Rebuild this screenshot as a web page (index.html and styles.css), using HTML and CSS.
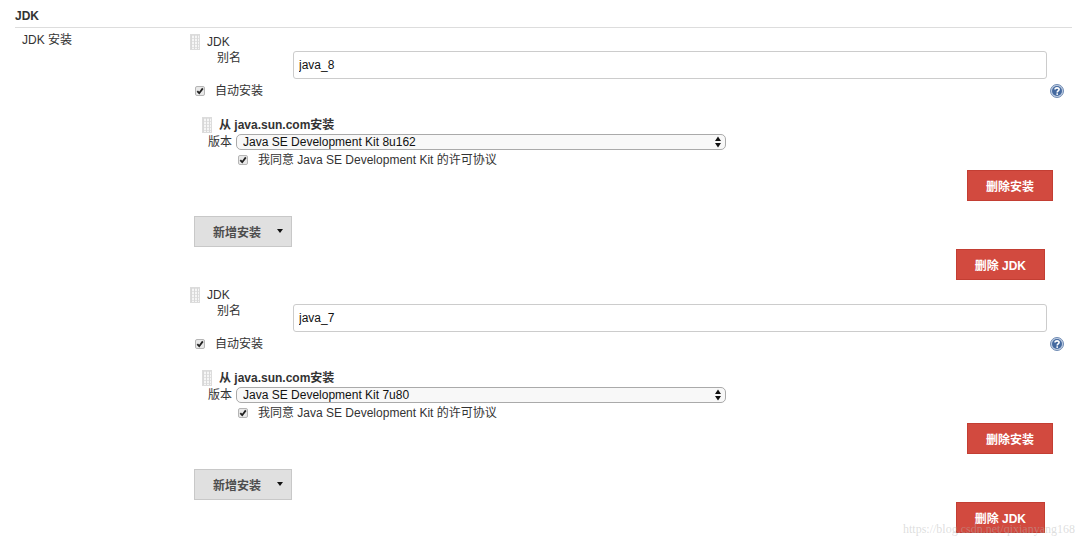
FILE: index.html
```html
<!DOCTYPE html>
<html lang="zh-CN">
<head>
    <meta charset="UTF-8">
    <meta name="viewport" content="width=device-width, initial-scale=1.0">
    <title>JDK</title>
    <link rel="stylesheet" href="styles.css">
</head>
<body>
    <form class="config">
        <h1 class="section-title">JDK</h1>
        <div class="section">
            <div class="section-label">JDK 安装</div>
            <div class="section-body">

                <div class="tool">
                    <div class="tool-head"><span class="grip"></span>JDK</div>
                    <div class="alias-row">
                        <label for="alias1">别名</label>
                        <input class="alias" type="text" id="alias1" value="java_8">
                    </div>
                    <div class="auto-row">
                        <label><input class="check" type="checkbox" checked>自动安装</label>
                        <a class="help" href="#" aria-label="?">
                            <svg width="14" height="14" viewBox="0 0 14 14">
                                <circle cx="7" cy="7" r="6.5" fill="#c3d0e4" stroke="#6f8bb3"/>
                                <circle cx="7" cy="7" r="5" fill="#44699f"/>
                                <path d="M5 5.6C5 3.3 9.1 3.3 9.1 5.5C9.1 7 7.2 6.8 7.2 8.4" fill="none" stroke="#fff" stroke-width="1.6"/>
                                <rect x="6.4" y="9.3" width="1.6" height="1.6" fill="#fff"/>
                            </svg>
                        </a>
                    </div>
                    <div class="installer">
                        <div class="installer-head"><span class="grip"></span>从 java.sun.com安装</div>
                        <div class="version-row">
                            <label for="version1">版本</label>
                            <div class="select-wrap">
                                <select class="version" id="version1">
                                    <option>Java SE Development Kit 8u162</option>
                                </select>
                                <svg class="arrows" width="6" height="12" viewBox="0 0 6 12"><path d="M3 0.5L6 5H0zM3 11.5L0 7H6z" fill="#111"/></svg>
                            </div>
                        </div>
                        <label class="agree-row"><input class="check" type="checkbox" checked>我同意 Java SE Development Kit 的许可协议</label>
                        <div class="delete-installer"><button class="btn danger" type="button">删除安装</button></div>
                    </div>
                    <button class="btn add" type="button">新增安装<svg width="6" height="4" viewBox="0 0 6 4"><path d="M0 0H6L3 4z" fill="#111"/></svg></button>
                    <div class="delete-tool"><button class="btn danger" type="button">删除 JDK</button></div>
                </div>

                <div class="tool">
                    <div class="tool-head"><span class="grip"></span>JDK</div>
                    <div class="alias-row">
                        <label for="alias2">别名</label>
                        <input class="alias" type="text" id="alias2" value="java_7">
                    </div>
                    <div class="auto-row">
                        <label><input class="check" type="checkbox" checked>自动安装</label>
                        <a class="help" href="#" aria-label="?">
                            <svg width="14" height="14" viewBox="0 0 14 14">
                                <circle cx="7" cy="7" r="6.5" fill="#c3d0e4" stroke="#6f8bb3"/>
                                <circle cx="7" cy="7" r="5" fill="#44699f"/>
                                <path d="M5 5.6C5 3.3 9.1 3.3 9.1 5.5C9.1 7 7.2 6.8 7.2 8.4" fill="none" stroke="#fff" stroke-width="1.6"/>
                                <rect x="6.4" y="9.3" width="1.6" height="1.6" fill="#fff"/>
                            </svg>
                        </a>
                    </div>
                    <div class="installer">
                        <div class="installer-head"><span class="grip"></span>从 java.sun.com安装</div>
                        <div class="version-row">
                            <label for="version2">版本</label>
                            <div class="select-wrap">
                                <select class="version" id="version2">
                                    <option>Java SE Development Kit 7u80</option>
                                </select>
                                <svg class="arrows" width="6" height="12" viewBox="0 0 6 12"><path d="M3 0.5L6 5H0zM3 11.5L0 7H6z" fill="#111"/></svg>
                            </div>
                        </div>
                        <label class="agree-row"><input class="check" type="checkbox" checked>我同意 Java SE Development Kit 的许可协议</label>
                        <div class="delete-installer"><button class="btn danger" type="button">删除安装</button></div>
                    </div>
                    <button class="btn add" type="button">新增安装<svg width="6" height="4" viewBox="0 0 6 4"><path d="M0 0H6L3 4z" fill="#111"/></svg></button>
                    <div class="delete-tool"><button class="btn danger" type="button">删除 JDK</button></div>
                </div>

            </div>
        </div>
        <div class="watermark">https://blog.csdn.net/qixianyang168</div>
    </form>
</body>
</html>
```
FILE: styles.css
```css
* {
    box-sizing: border-box;
}

body {
    margin: 0;
    background-color: #fff;
    color: #333;
    font-family: "Liberation Sans", "Noto Sans CJK SC", sans-serif;
    font-size: 12px;
    line-height: 16px;
}

input, select, button {
    font-family: inherit;
    font-size: 12px;
    margin: 0;
}

.config {
    position: relative;
    padding-top: 8px;
}

.section-title {
    margin: 0 8px 0 15px;
    padding-bottom: 3px;
    border-bottom: 1px solid #ddd;
    font-size: 12px;
    line-height: 16px;
}

.section {
    display: flex;
    padding-top: 4px;
}

.section-label {
    width: 190px;
    padding-left: 22px;
    flex-shrink: 0;
}

.section-body {
    flex: 1;
    padding-top: 2px;
}

.tool {
    margin-bottom: 7px;
}

.tool-head, .installer-head {
    display: flex;
    align-items: center;
    gap: 7px;
}

.installer-head {
    font-weight: bold;
}

.grip {
    width: 10px;
    height: 16px;
    border: 1px solid #dcdcdc;
    background-color: #f6f6f6;
    background-image: linear-gradient(90deg, #d8d8d8 1px, transparent 1px), linear-gradient(#e2e2e2 1px, transparent 1px);
    background-size: 3px 3px;
}

.alias-row {
    display: flex;
    align-items: flex-start;
    padding: 0 33px 0 27px;
}

.alias-row label {
    width: 76px;
    flex-shrink: 0;
}

.alias {
    flex: 1;
    height: 28px;
    margin-top: 1px;
    padding: 0 5px 1px;
    border: 1px solid #ccc;
    border-radius: 3px;
    color: #111;
}

.auto-row {
    display: flex;
    justify-content: space-between;
    align-items: center;
    padding: 4px 16px 0 5px;
}

.auto-row label, .agree-row {
    display: flex;
    align-items: center;
    gap: 10px;
}

.help {
    display: flex;
}

.check {
    appearance: none;
    width: 10px;
    height: 10px;
    border: 1px solid #b5b5b5;
    border-radius: 2px;
    background: #e8e8e8 url("data:image/svg+xml,%3Csvg xmlns='http://www.w3.org/2000/svg' viewBox='0 0 8 8'%3E%3Cpath d='M1.3 4.2L3.2 6.2L6.8 1.4' fill='none' stroke='%23222' stroke-width='1.8'/%3E%3C/svg%3E") center no-repeat;
}

.installer {
    padding: 18px 27px 0 12px;
}

.version-row {
    display: flex;
    align-items: center;
    gap: 4px;
    padding: 1px 0 1px 6px;
}

.select-wrap {
    position: relative;
    width: 490px;
}

.version {
    appearance: none;
    display: block;
    width: 100%;
    height: 16px;
    padding: 0 6px;
    border: 1px solid #aaa;
    border-radius: 5px;
    background-color: #f8f8f8;
    color: #111;
    line-height: 14px;
}

.arrows {
    position: absolute;
    top: 2px;
    right: 5px;
    pointer-events: none;
}

.agree-row {
    padding: 1px 0 2px 36px;
}

.delete-installer, .delete-tool {
    display: flex;
    justify-content: flex-end;
}

.delete-tool {
    padding: 2px 35px 0 0;
}

.btn {
    display: flex;
    align-items: center;
    height: 31px;
    padding: 0 18px 1px;
    border: 1px solid #c33e33;
    font-weight: bold;
}

.danger {
    background-color: #d24a3f;
    color: #fff;
}

.add {
    gap: 16px;
    margin: 15px 0 0 4px;
    padding-right: 8px;
    border-color: #c8c8c8;
    background-color: #e0e0e0;
    color: #4d4d4d;
}

.watermark {
    position: absolute;
    right: 5px;
    bottom: 5px;
    color: rgba(180, 180, 180, 0.45);
    font-family: "Liberation Serif", serif;
    font-size: 12px;
    line-height: 12px;
}
```
